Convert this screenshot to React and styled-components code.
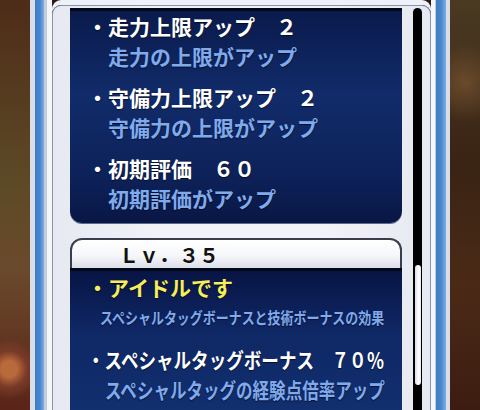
import React from 'react';
import styled, { createGlobalStyle } from 'styled-components';

const GlobalStyle = createGlobalStyle`
  html, body {
    margin: 0;
    padding: 0;
    background: #2a1a10;
  }
`;

const Page = styled.div`
  display: flex;
  width: 480px;
  height: 410px;
  overflow: hidden;
  font-family: "Noto Sans CJK JP", "Noto Sans", sans-serif;
`;

const Backdrop = styled.div`
  width: 30px;
  flex-shrink: 0;
  background: ${p => p.$side === 'left'
    ? 'radial-gradient(circle at 30% 90%, #b86a3a 0 8px, #7a3a28 18px, transparent 30px), linear-gradient(180deg, #4e2c18 0%, #5c4a26 45%, #6a4a2c 65%, #5a2418 100%)'
    : 'radial-gradient(circle at 50% 20%, #6a4a2c 0, transparent 40px), linear-gradient(180deg, #4a3a22 0%, #3a2414 40%, #4a2a16 70%, #3c1c10 100%)'};
`;

const Rail = styled.div`
  width: ${p => p.$w}px;
  flex-shrink: 0;
  background: ${p => p.$side === 'left'
    ? 'linear-gradient(90deg, #d8dde8 0 5px, #3f7cc4 5px, #4a86cc 10px, #7cb0e6 14px, #c4ccda 14px 17px, #f4f6fa 17px)'
    : 'linear-gradient(90deg, #f4f6fa 0 4px, #c4ccda 4px 5px, #3f7cc4 5px, #4a86cc 10px, #7cb0e6 15px, #d8dde8 15px)'};
`;

const Panel = styled.div`
  margin-top: 5px;
  width: 379px;
  box-sizing: border-box;
  flex-shrink: 0;
  border: 1px solid #8a93a8;
  border-bottom: none;
  border-radius: 9px 9px 0 0;
  background: linear-gradient(90deg, #e6e9f1, #f2f3f8 30%, #f2f3f8 70%, #e6e9f1);
  display: flex;
  gap: 11px;
  padding: 2px 8px 0 17px;
  box-shadow: 0 -5px 0 #eef1f7;
`;

const Viewport = styled.div`
  width: 332px;
  flex-shrink: 0;
  display: flex;
  flex-direction: column;
  gap: 15px;
  overflow: hidden;
`;

const Track = styled.div`
  width: 9px;
  flex-shrink: 0;
  background: #000;
  border-radius: 5px 5px 0 0;
  padding: 257px 1px 0 2px;
  box-sizing: border-box;
`;

const Thumb = styled.div`
  width: 6px;
  height: 120px;
  border-radius: 3px;
  background: linear-gradient(90deg, #d8dce6, #ffffff 60%, #e8eaf0);
`;

const Card = styled.div`
  display: flex;
  flex-direction: column;
`;

const Header = styled.div`
  height: 28px;
  border: 2px solid #3a3e4a;
  border-bottom: none;
  border-radius: 12px 12px 0 0;
  background: linear-gradient(180deg, #ffffff 0%, #f6f7fa 55%, #dcdfe8 100%);
  display: flex;
  align-items: center;
  padding-left: 47px;
  font-weight: 700;
  font-size: 20px;
  letter-spacing: 0;
  color: #111;
`;

const Body = styled.div`
  display: flex;
  flex-direction: column;
  gap: ${p => p.$gap}px;
  padding: ${p => p.$pad};
  border-radius: ${p => (p.$top ? '0' : '0 0 12px 12px')};
  border-top: 3px solid #030818;
  background: ${p => p.$top
    ? 'linear-gradient(180deg, #081444 0%, #0f2866 40%, #12306f 100%)'
    : 'linear-gradient(180deg, #0a1a4c 0%, #112c6a 40%, #0d2158 80%, #081643 100%)'};
  box-shadow: 0 1px 0 #5a6a90;
`;

const Item = styled.div`
  display: flex;
  flex-direction: column;
`;

const tones = {
  title: '#ffffff',
  note: '#80aaee',
  gold: '#f6ee5a',
};

const Line = styled.div`
  font-weight: 700;
  font-size: ${p => p.$size || 21}px;
  letter-spacing: 0;
  line-height: 30px;
  white-space: nowrap;
  color: ${p => tones[p.$tone]};
  margin-left: ${p => p.$indent || 0}px;
  transform: scaleX(${p => p.$fit || 1});
  transform-origin: left center;
  text-shadow: 0 1px 1px rgba(0, 0, 0, 0.6);
`;

const upgrades = [
  { title: '・走力上限アップ　２', note: '走力の上限がアップ' },
  { title: '・守備力上限アップ　２', note: '守備力の上限がアップ' },
  { title: '・初期評価　６０', note: '初期評価がアップ' },
];

export default function App() {
  return (
    <>
      <GlobalStyle />
      <Page>
        <Backdrop $side="left" />
        <Rail $side="left" $w={22} />
        <Panel>
          <Viewport>
            <Body $gap={11} $pad="0 0 10px 17px">
              {upgrades.map((u, id) => (
                <Item key={id}>
                  <Line $tone="title">{u.title}</Line>
                  <Line $tone="note" $indent={21}>{u.note}</Line>
                </Item>
              ))}
            </Body>
            <Card>
              <Header>Ｌｖ．３５</Header>
              <Body $top $gap={12} $pad="1px 0 20px 17px">
                <Item>
                  <Line $tone="gold">・アイドルです</Line>
                  <Line $tone="note" $size={16} $indent={13} $fit={0.81}>
                    スペシャルタッグボーナスと技術ボーナスの効果
                  </Line>
                </Item>
                <Item>
                  <Line $tone="title" $fit={0.836}>・スペシャルタッグボーナス　７０％</Line>
                  <Line $tone="note" $indent={18} $fit={0.787}>スペシャルタッグの経験点倍率アップ</Line>
                </Item>
              </Body>
            </Card>
          </Viewport>
          <Track>
            <Thumb />
          </Track>
        </Panel>
        <Rail $side="right" $w={19} />
        <Backdrop $side="right" />
      </Page>
    </>
  );
}
